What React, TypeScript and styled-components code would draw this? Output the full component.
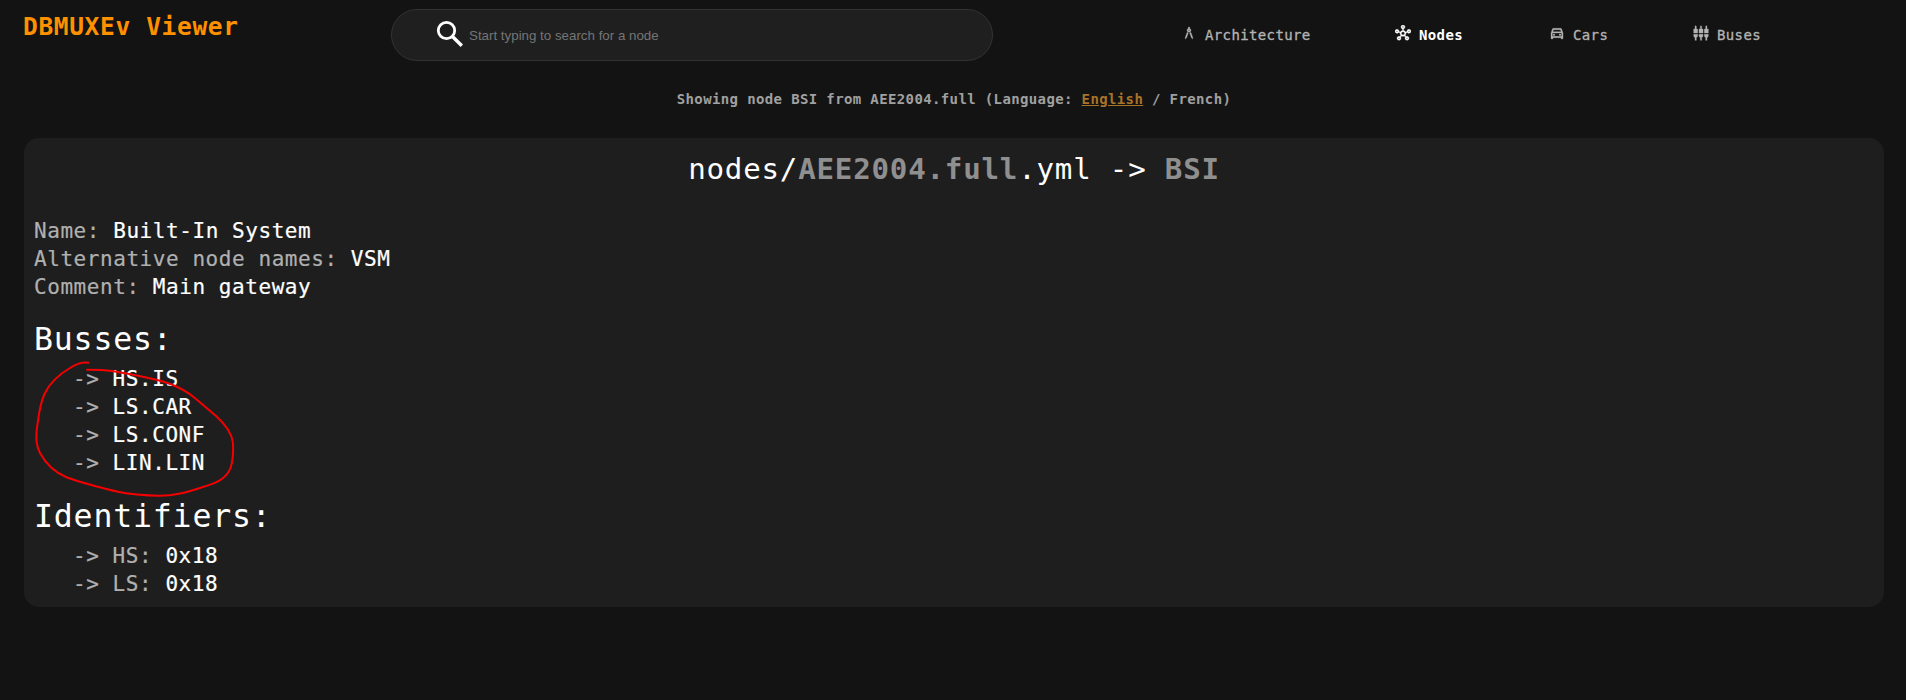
import React from "react";
import styled, { createGlobalStyle } from "styled-components";
import {
  MdArchitecture,
  MdOutlineHub,
  MdOutlineDirectionsCar,
  MdSettingsInputComponent,
} from "react-icons/md";

const GlobalStyle = createGlobalStyle`
  * { box-sizing: border-box; }
  body {
    margin: 0;
    background: #131313;
    color: #fff;
    font-family: Consolas, "DejaVu Sans Mono", monospace;
  }
  #root * { letter-spacing: 0.0266em; }
`;

const Page = styled.div`
  min-height: 700px;
  background: #131313;
`;

const Header = styled.header`
  display: flex;
  align-items: flex-start;
  height: 61px;
  padding: 9px 0 0 23px;
`;

const Logo = styled.h1`
  width: 368px;
  margin: 0;
  padding-top: 1px;
  font-size: 24.5px;
  line-height: 34px;
  font-weight: bold;
  color: #ff9100;
`;

const SearchBox = styled.label`
  display: flex;
  align-items: center;
  width: 602px;
  height: 52px;
  padding-left: 44px;
  border: 1px solid #333;
  border-radius: 26px;
  background: #1f1f1f;
`;

const SearchIcon = styled.svg`
  width: 28px;
  height: 28px;
  margin-top: -2px;
`;

const SearchInput = styled.input`
  width: 450px;
  margin-left: 5px;
  padding: 2px 0 0;
  border: 0;
  outline: 0;
  background: transparent;
  color: #fff;
  font: 13.33px/16px Arial, "Liberation Sans", sans-serif;
  #root &, #root &::placeholder {
    letter-spacing: 0;
  }
  &::placeholder {
    color: #757575;
  }
`;

const Nav = styled.nav`
  display: grid;
  grid-template-columns: 214px 154px 144px auto;
  margin-left: 188px;
  padding-top: 16px;
`;

const NavItem = styled.a<{ $active?: boolean }>`
  display: flex;
  gap: 8px;
  font-size: 14px;
  line-height: 20px;
  font-weight: ${(p) => (p.$active ? "bold" : "normal")};
  color: ${(p) => (p.$active ? "#fff" : "#b3b3b3")};
  -webkit-text-stroke: ${(p) => (p.$active ? "0" : "0.3px")};
  svg {
    width: 16px;
    height: 16px;
  }
  svg path:not([fill="none"]) {
    stroke: currentColor;
    stroke-width: 0.5px;
  }
`;

const Status = styled.p`
  margin: 28px 0 29px;
  padding-left: 2px;
  font-size: 14px;
  line-height: 20px;
  font-weight: bold;
  text-align: center;
  color: #a0a0a0;
`;

const Language = styled.a`
  color: #a87229;
  text-decoration: underline;
`;

const Card = styled.main`
  position: relative;
  height: 469px;
  margin: 0 22px 0 24px;
  padding: 11px 10px 9px;
  border-radius: 15px;
  background: #1e1e1e;
`;

const Title = styled.h2`
  margin: 0 0 28px;
  font-size: 29.17px;
  line-height: 40px;
  font-weight: normal;
  text-align: center;
  b {
    color: #8f8f8f;
  }
`;

const SectionTitle = styled.h3<{ $top: number }>`
  margin: ${(p) => p.$top}px 0 5px;
  font-size: 31.5px;
  line-height: 42px;
  font-weight: normal;
`;

const Row = styled.div<{ $indent?: boolean }>`
  padding-left: ${(p) => (p.$indent ? 39 : 0)}px;
  font-size: 21px;
  line-height: 28px;
  white-space: pre;
  -webkit-text-stroke: 0.2px;
`;

const Muted = styled.span`
  color: #b0b0b0;
`;

const Marker = styled.svg`
  position: absolute;
  left: 0;
  top: 212px;
  pointer-events: none;
`;

const details = [
  ["Name:", "Built-In System"],
  ["Alternative node names:", "VSM"],
  ["Comment:", "Main gateway"],
];
const buses = ["HS.IS", "LS.CAR", "LS.CONF", "LIN.LIN"];
const identifiers = [
  ["HS:", "0x18"],
  ["LS:", "0x18"],
];

export default function App() {
  return (
    <Page>
      <GlobalStyle />
      <Header>
        <Logo>DBMUXEv Viewer</Logo>
        <SearchBox>
          <SearchIcon viewBox="0 0 28 28" fill="none" stroke="#fff">
            <circle cx="10.5" cy="10.5" r="8.2" strokeWidth="2.8" />
            <path d="M16.2 16.2L25.8 25.8" strokeWidth="3.4" />
          </SearchIcon>
          <SearchInput placeholder="Start typing to search for a node" />
        </SearchBox>
        <Nav>
          <NavItem><MdArchitecture />Architecture</NavItem>
          <NavItem $active><MdOutlineHub />Nodes</NavItem>
          <NavItem><MdOutlineDirectionsCar />Cars</NavItem>
          <NavItem><MdSettingsInputComponent />Buses</NavItem>
        </Nav>
      </Header>
      <Status>
        Showing node BSI from AEE2004.full (Language: <Language>English</Language> / French)
      </Status>
      <Card>
        <Title>
          nodes/<b>AEE2004.full</b>.yml -&gt; <b>BSI</b>
        </Title>
        {details.map(([label, value]) => (
          <Row key={label}><Muted>{label}</Muted> {value}</Row>
        ))}
        <SectionTitle $top={17}>Busses:</SectionTitle>
        {buses.map((bus) => (
          <Row key={bus} $indent><Muted>-&gt;</Muted> {bus}</Row>
        ))}
        <SectionTitle $top={18}>Identifiers:</SectionTitle>
        {identifiers.map(([label, value]) => (
          <Row key={label} $indent><Muted>-&gt; {label}</Muted> {value}</Row>
        ))}
        <Marker width="230" height="150" viewBox="24 350 230 150" fill="none">
          <path
            d="M88.5 362.7C82 362 76 364 70 368C58 375 50 382 44.500 394C39 406 38.500 418 36.700 430C36 439 36 445 40 453C46 464 56 473 67 477.500C76 481 88 484 99 487C117 492 130 495 158 495.700C174 496 184 493 200 488C214 483.500 226 480 230.500 468C233 461 233.500 454 233 443C232 434 225 424 216 416C209 410 202 404 196 399C187 391 176 385.500 163 381.500C148 377.500 130 374 112 371C103 369.700 95 369.700 87 369.700"
            stroke="#f50000"
            strokeWidth="2"
            strokeLinecap="round"
            strokeLinejoin="round"
          />
        </Marker>
      </Card>
    </Page>
  );
}
